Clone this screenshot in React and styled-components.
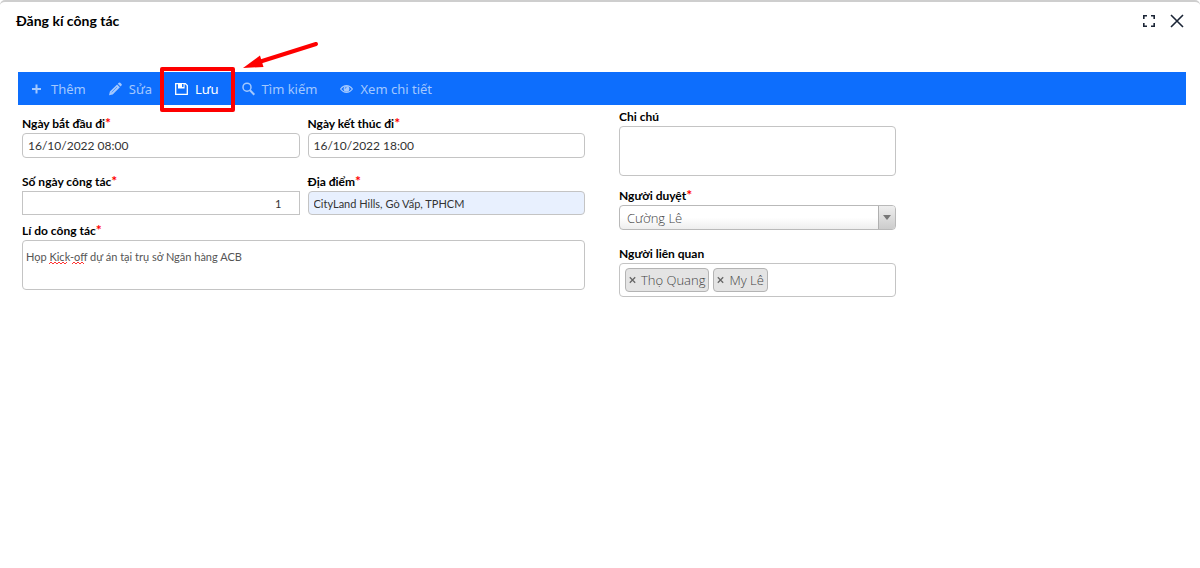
import React from 'react';
import styled, { createGlobalStyle } from 'styled-components';

const GlobalStyle = createGlobalStyle`
  *, *::before, *::after { box-sizing: border-box; }
  body {
    margin: 0;
    background: #fff;
    color: #000;
    font-family: Lato, "Open Sans", sans-serif;
  }
  button, input, select, textarea { font: inherit; margin: 0; }
`;

const Dialog = styled.section`
  border-top: 2px solid #cecece;
  border-radius: 5px 5px 0 0;
`;

const Header = styled.header`
  display: flex;
  align-items: center;
  justify-content: space-between;
  height: 38px;
  padding: 0 16px;
`;

const Title = styled.h1`
  margin: 0;
  font-size: 14px;
  line-height: 18px;
  font-weight: 700;
`;

const WindowActions = styled.div`
  display: flex;
  align-items: center;
  gap: 14px;
`;

const IconButton = styled.button`
  display: flex;
  padding: 0;
  border: 0;
  background: none;
  color: #1b2536;
  cursor: pointer;
`;

const Body = styled.div`
  padding: 32px 14px 0 18px;
`;

const Toolbar = styled.div`
  position: relative;
  display: flex;
  height: 33px;
  padding-left: 2px;
  background: #0d6efd;
`;

const ToolButton = styled.button`
  position: relative;
  display: flex;
  align-items: center;
  gap: 7px;
  padding: 0 12px 0 11px;
  border: 0;
  background: none;
  color: ${(p) => (p.$active ? '#fff' : '#a3c8fe')};
  font-family: "Noto Sans", "Open Sans", sans-serif;
  font-size: 13px;
  line-height: 20px;
  white-space: nowrap;
  cursor: pointer;
`;

const Highlight = styled.span`
  position: absolute;
  inset: -5px -4px -7px -4px;
  z-index: 1;
  border: 4px solid #fe0000;
  border-radius: 2px;
  pointer-events: none;
`;

const Arrow = styled.svg`
  position: absolute;
  left: 100%;
  bottom: 100%;
  margin: 0 0 3px 12px;
  pointer-events: none;
`;

const Form = styled.form`
  display: grid;
  grid-template-columns: 563fr 277fr 252fr;
  column-gap: 34px;
  padding: 3px 4px 0;
`;

const Column = styled.div`
  padding-top: ${(p) => p.$top || 0}px;
`;

const Pair = styled.div`
  display: grid;
  grid-template-columns: 1fr 1fr;
  gap: 8px;
`;

const Field = styled.div`
  display: flex;
  flex-direction: column;
  min-width: 0;
  margin-bottom: ${(p) => p.$gap || 0}px;
`;

const Label = styled.label`
  font-size: 12px;
  line-height: 18px;
  font-weight: 700;
`;

const Star = styled.span`
  color: #f00;
  font-size: 14px;
  line-height: 14px;
`;

const TextInput = styled.input`
  width: 100%;
  height: ${(p) => (p.$small ? 24 : 25)}px;
  padding: 0 5px;
  border: 1px solid #c4c4c4;
  border-radius: ${(p) => (p.$square ? 0 : 4)}px;
  background: ${(p) => (p.$filled ? '#e8f0fe' : '#fff')};
  color: #333;
  font-size: ${(p) => (p.$small ? 11 : 12)}px;
  outline: 0;
`;

const NumberInput = styled(TextInput)`
  padding-right: 17px;
  text-align: right;
`;

const AreaWrap = styled.div`
  position: relative;
  display: flex;
`;

const TextArea = styled.textarea`
  width: 100%;
  height: 50px;
  padding: 7px 3px;
  border: 1px solid #c4c4c4;
  border-radius: 4px;
  color: #555;
  font-size: 11px;
  line-height: 18px;
  resize: none;
  outline: 0;
`;

const Squiggle = styled.svg`
  position: absolute;
  left: 27px;
  top: 21px;
  pointer-events: none;
`;

const SelectWrap = styled.div`
  position: relative;
  display: flex;
`;

const Select = styled.select`
  appearance: none;
  width: 100%;
  height: 25px;
  padding: 0 24px 0 7px;
  border: 1px solid #b9b9b9;
  border-radius: 4px;
  background: linear-gradient(#fff 50%, #eee);
  color: #444;
  font-family: "Open Sans", sans-serif;
  font-size: 13px;
  font-weight: 300;
`;

const SelectArrow = styled.span`
  position: absolute;
  inset: 1px 1px 1px auto;
  display: flex;
  align-items: center;
  justify-content: center;
  width: 17px;
  border-left: 1px solid #b0b0b0;
  border-radius: 0 3px 3px 0;
  background: linear-gradient(#eee, #ccc);
  pointer-events: none;
`;

const TagBox = styled.ul`
  display: flex;
  align-items: center;
  gap: 4px;
  height: 34px;
  margin: 0;
  padding: 0 5px;
  border: 1px solid #c4c4c4;
  border-radius: 4px;
  list-style: none;
`;

const Tag = styled.li`
  display: flex;
  align-items: center;
  gap: 5px;
  height: 24px;
  padding: 0 3px;
  border: 1px solid #b4b4b4;
  border-radius: 4px;
  background: #e4e4e4;
  color: #444;
  font-family: "Open Sans", sans-serif;
  font-size: 13px;
  font-weight: 300;
  white-space: nowrap;
`;

const PlusIcon = () => (
  <svg width="13" height="14" viewBox="0 0 13 14" fill="none" stroke="currentColor" strokeWidth="2">
    <path d="M5.5 2.5v9M1 7h9" />
  </svg>
);

const PencilIcon = () => (
  <svg width="13" height="14" viewBox="0 0 13 14" fill="currentColor">
    <path d="M0 13.200.9 9.600 8.100 2.400 10.900 5.200 3.700 12.400zM8.800 1.700l1-1q.7-.6 1.400 0l1.300 1.300q.6.7 0 1.400l-1 1z" />
    <path d="m2.700 10.300 5.300-5.300" stroke="#0d6efd" strokeWidth=".5" />
  </svg>
);

const SaveIcon = () => (
  <svg width="13" height="14" viewBox="0 0 13 14" fill="none" stroke="currentColor">
    <path d="M.7 1.6h9.6l2 2v8.700H.7z" strokeWidth="1.3" />
    <path d="M3 1.500h6.600v5H3z" fill="currentColor" stroke="none" />
    <path d="M7.800 2v3" stroke="#0d6efd" strokeWidth="1.5" />
  </svg>
);

const SearchIcon = () => (
  <svg width="13" height="14" viewBox="0 0 13 14" fill="none" stroke="currentColor">
    <circle cx="5" cy="5.2" r="4" strokeWidth="1.5" />
    <path d="m8 8.300 4.300 4.400" strokeWidth="2" />
  </svg>
);

const EyeIcon = () => (
  <svg width="13" height="14" viewBox="0 0 13 14" fill="none" stroke="currentColor">
    <path d="M.6 7Q3 3.600 6.500 3.600T12.400 7Q10 10.400 6.500 10.400T.6 7z" strokeWidth="1.2" />
    <circle cx="6.500" cy="6.800" r="2.900" fill="currentColor" stroke="none" />
    <path d="M5.200 6.600q0-1.300 1.300-1.300" stroke="#0d6efd" strokeWidth=".8" />
  </svg>
);

const TOOLS = [
  { label: 'Thêm', Icon: PlusIcon },
  { label: 'Sửa', Icon: PencilIcon },
  { label: 'Lưu', Icon: SaveIcon, active: true },
  { label: 'Tìm kiếm', Icon: SearchIcon },
  { label: 'Xem chi tiết', Icon: EyeIcon },
];

const FieldLabel = ({ id, required, children }) => (
  <Label htmlFor={id}>
    {children}
    {required && <Star>*</Star>}
  </Label>
);

const RemoveButton = styled(IconButton)`
  color: #666;
`;

const PersonTag = ({ name }) => (
  <Tag>
    <RemoveButton type="button" aria-label={`Xóa ${name}`}>
      <svg width="7" height="8" viewBox="0 0 7 8" fill="none" stroke="currentColor" strokeWidth="1.3">
        <path d="m.8 1.300 5.400 5.400M6.200 1.300.8 6.700" />
      </svg>
    </RemoveButton>
    {name}
  </Tag>
);

export default function App() {
  return (
    <>
      <GlobalStyle />
      <Dialog aria-labelledby="dialog-title">
        <Header>
          <Title id="dialog-title">Đăng kí công tác</Title>
          <WindowActions>
            <IconButton type="button" aria-label="Toàn màn hình">
              <svg width="14" height="14" viewBox="0 0 14 14" fill="none" stroke="currentColor" strokeWidth="1.6">
                <path d="M1.800 5V1.800H5M9 1.800h3.200V5M12.200 9v3.200H9M5 12.200H1.800V9" />
              </svg>
            </IconButton>
            <IconButton type="button" aria-label="Đóng">
              <svg width="14" height="14" viewBox="0 0 14 14" fill="none" stroke="currentColor" strokeWidth="1.6">
                <path d="m1 1 12 12M13 1 1 13" />
              </svg>
            </IconButton>
          </WindowActions>
        </Header>
        <Body>
          <Toolbar role="toolbar">
            {TOOLS.map(({ label, Icon, active }) => (
              <ToolButton key={label} type="button" $active={active}>
                <Icon />
                {label}
                {active && (
                  <>
                    <Highlight />
                    <Arrow width="78" height="28" viewBox="0 0 78 28">
                      <path d="M16 21 73 3" stroke="#fe0000" strokeWidth="4" strokeLinecap="round" />
                      <path d="M0 27 17 14.500 20.500 26z" fill="#fe0000" />
                    </Arrow>
                  </>
                )}
              </ToolButton>
            ))}
          </Toolbar>
          <Form>
            <Column $top={7}>
              <Pair>
                <Field $gap={15}>
                  <FieldLabel id="start" required>Ngày bắt đầu đi</FieldLabel>
                  <TextInput id="start" defaultValue="16/10/2022 08:00" />
                </Field>
                <Field $gap={15}>
                  <FieldLabel id="end" required>Ngày kết thúc đi</FieldLabel>
                  <TextInput id="end" defaultValue="16/10/2022 18:00" />
                </Field>
              </Pair>
              <Pair>
                <Field $gap={7}>
                  <FieldLabel id="days" required>Số ngày công tác</FieldLabel>
                  <NumberInput id="days" inputMode="numeric" $small $square defaultValue="1" />
                </Field>
                <Field $gap={7}>
                  <FieldLabel id="place" required>Địa điểm</FieldLabel>
                  <TextInput id="place" $small $filled defaultValue="CityLand Hills, Gò Vấp, TPHCM" />
                </Field>
              </Pair>
              <Field>
                <FieldLabel id="reason" required>Lí do công tác</FieldLabel>
                <AreaWrap>
                  <TextArea id="reason" spellCheck={false} defaultValue="Họp Kick-off dự án tại trụ sở Ngân hàng ACB" />
                  <Squiggle width="38" height="4" viewBox="0 0 38 4" fill="none" stroke="#f33">
                    <path d="m0 3 2-2 2 2 2-2 2 2 2-2 2 2 2-2 2 2 2-2M23 3l2-2 2 2 2-2 2 2 2-2 2 2" />
                  </Squiggle>
                </AreaWrap>
              </Field>
            </Column>
            <Column>
              <Field $gap={11}>
                <FieldLabel id="note">Chi chú</FieldLabel>
                <TextArea id="note" />
              </Field>
              <Field $gap={15}>
                <FieldLabel id="approver" required>Người duyệt</FieldLabel>
                <SelectWrap>
                  <Select id="approver" defaultValue="Cường Lê">
                    <option>Cường Lê</option>
                  </Select>
                  <SelectArrow>
                    <svg width="8" height="5" viewBox="0 0 8 5" fill="#777">
                      <path d="M0 0h8L4 5z" />
                    </svg>
                  </SelectArrow>
                </SelectWrap>
              </Field>
              <Field>
                <Label as="span" id="related-label">Người liên quan</Label>
                <TagBox aria-labelledby="related-label">
                  <PersonTag name="Thọ Quang" />
                  <PersonTag name="My Lê" />
                </TagBox>
              </Field>
            </Column>
          </Form>
        </Body>
      </Dialog>
    </>
  );
}
